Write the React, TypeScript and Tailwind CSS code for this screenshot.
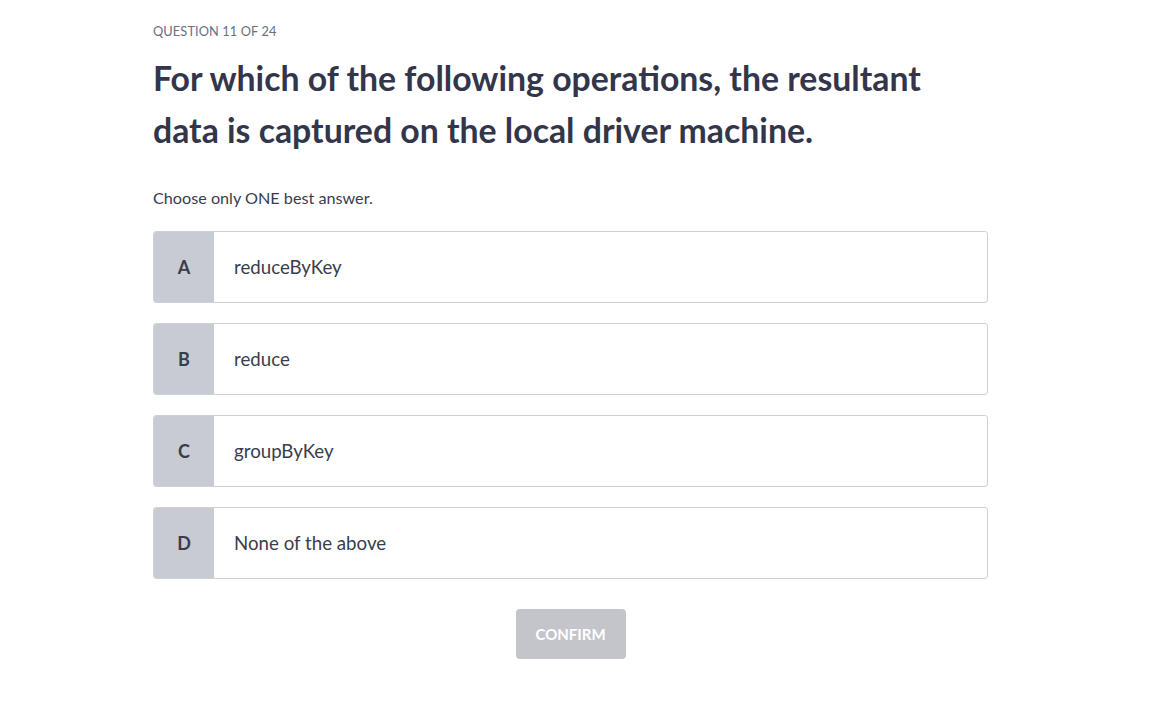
import React from "react";

const options = [
  { letter: "A", text: "reduceByKey" },
  { letter: "B", text: "reduce" },
  { letter: "C", text: "groupByKey" },
  { letter: "D", text: "None of the above" },
];

export default function App() {
  return (
    <div
      className="min-h-[702px] w-full bg-white text-[#353848]"
      style={{ fontFamily: "Lato, 'Noto Sans', sans-serif" }}
    >
      <div className="ml-[153px] w-[835px] pt-[22px]">
        <div className="text-[12.8px] leading-[18px] text-[#6b6f80] tracking-[0.1px]">QUESTION 11 OF 24</div>
        <h1 className="mt-[12px] w-[790px] text-[33.8px] font-bold leading-[52px] text-[#33364a]">
          For which of the following operations, the resultant data is captured on the local driver machine.
        </h1>
        <p className="mt-[31px] text-[16.2px] leading-[22px] text-[#3a3d4c]">Choose only ONE best answer.</p>
        <div className="mt-[22px] flex flex-col gap-[20px]">
          {options.map((o) => (
            <div
              key={o.letter}
              className="flex h-[72px] overflow-hidden rounded-[3px] border border-[#d0d1d8] bg-white"
            >
              <div className="flex w-[60px] shrink-0 items-center justify-center bg-[#c9cbd4] text-[18px] font-bold text-[#3a3d4c]">
                {o.letter}
              </div>
              <div className="flex items-center pl-[20px] text-[18.7px] text-[#3a3d4c]">{o.text}</div>
            </div>
          ))}
        </div>
        <div className="mt-[30px] flex justify-center">
          <button className="h-[50px] w-[110px] rounded-[4px] bg-[#c4c5cb] text-[15px] font-bold text-white">
            CONFIRM
          </button>
        </div>
      </div>
    </div>
  );
}
